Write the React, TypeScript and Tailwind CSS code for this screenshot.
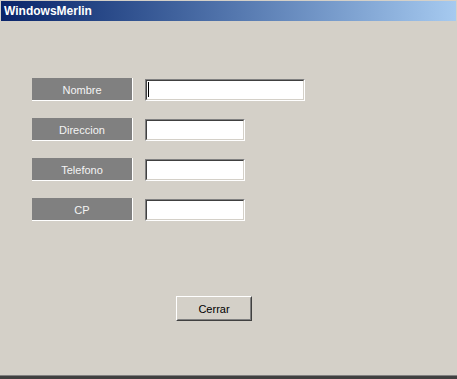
const fields = [
  { label: "Nombre", width: "w-[160px]", caret: true },
  { label: "Direccion", width: "w-[100px]", caret: false },
  { label: "Telefono", width: "w-[100px]", caret: false },
  { label: "CP", width: "w-[100px]", caret: false },
];

function Field({ label, width, caret }: { label: string; width: string; caret: boolean }) {
  return (
    <div className="flex items-center gap-[12px] h-[23px]">
      <div className="w-[101px] h-[23px] bg-[#808080] border-r border-b border-white flex items-center justify-center text-[11px] text-[#f4f4f4] pt-[2px]">
        {label}
      </div>
      <div className={`${width} h-[22px] border border-t-[#808080] border-l-[#808080] border-b-white border-r-white`}>
        <div className="h-full border border-t-[#404040] border-l-[#404040] border-b-[#d4d0c8] border-r-[#d4d0c8] bg-white flex items-center pl-[1px]">
          {caret && <div className="w-[1px] h-[15px] bg-black" />}
        </div>
      </div>
    </div>
  );
}

export default function App() {
  return (
    <div className="w-[457px] h-[379px] bg-[#d4d0c8] flex flex-col pt-[1px] px-[1px] border-b-[3px] border-b-[#404040] font-['Liberation_Sans',Arial,sans-serif]">
      <div className="h-[20px] bg-gradient-to-r from-[#0a246a] to-[#a6caf0] flex items-center pl-[3px] text-white font-bold text-[12px]">
        WindowsMerlin
      </div>
      <div className="flex flex-col gap-[17px] pl-[31px] pt-[57px]">
        {fields.map((f) => (
          <Field key={f.label} {...f} />
        ))}
      </div>
      <div className="pl-[175px] pt-[75px]">
        <button className="w-[76px] h-[25px] border border-t-white border-l-white border-b-[#404040] border-r-[#404040] bg-[#d4d0c8]">
          <div className="h-full border border-t-[#d4d0c8] border-l-[#d4d0c8] border-b-[#808080] border-r-[#808080] flex items-center justify-center text-[11px] text-black pt-[1px]">
            Cerrar
          </div>
        </button>
      </div>
      <div className="flex-1" />
      <div className="h-[1px] bg-[#808080] -mx-[1px]" />
    </div>
  );
}
